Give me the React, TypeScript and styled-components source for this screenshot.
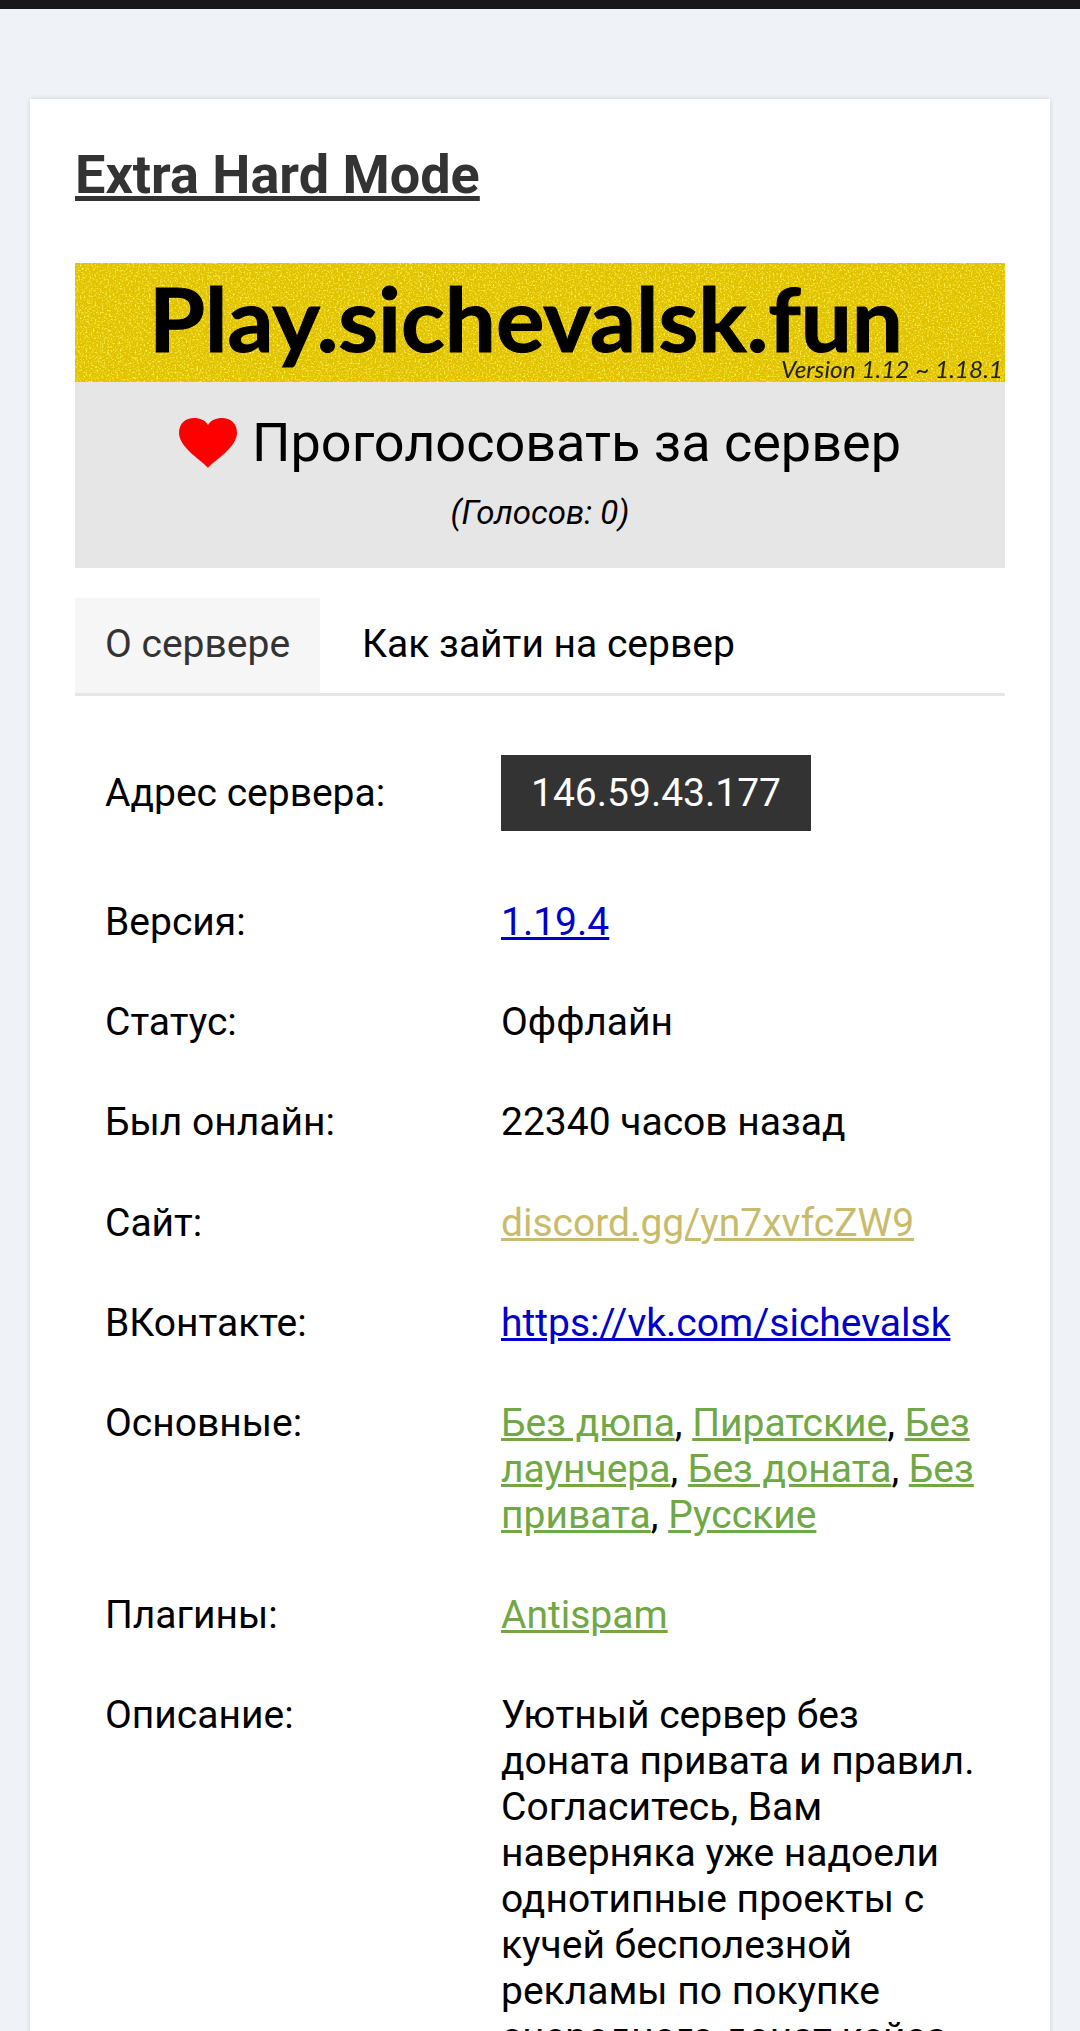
import React from "react";
import styled, { createGlobalStyle } from "styled-components";

const GlobalStyle = createGlobalStyle`
  html, body {
    margin: 0;
    height: 2031px;
    overflow: hidden;
    background: #eff2f6;
    font-family: Roboto, "Liberation Sans", sans-serif;
  }
`;

const TopBar = styled.div`
  height: 9px;
  background: #181818;
`;

const Page = styled.main`
  padding: 90px 30px 0;
`;

const Card = styled.section`
  background: #fff;
  padding: 45px;
  box-shadow: 0 0 5px rgba(0, 0, 0, 0.14);
`;

const Title = styled.h1`
  margin: 0 0 57px;
  font-size: 54px;
  line-height: 62px;
  font-weight: 700;
  color: #333;
  text-decoration: underline;
`;

const BannerArt = styled.svg`
  display: block;
  width: 930px;
  height: 119px;
`;

const VoteBox = styled.div`
  background: #e6e6e6;
  height: 186px;
  padding-top: 27px;
  box-sizing: border-box;
  text-align: center;
  color: #000;
`;

const VoteTitle = styled.div`
  display: flex;
  justify-content: center;
  align-items: center;
  gap: 15px;
  font-size: 54px;
  line-height: 68px;
`;

const VoteCount = styled.div`
  margin-top: 16px;
  font-size: 33px;
  line-height: 40px;
  font-style: italic;
`;

const Tabs = styled.nav`
  display: flex;
  gap: 12px;
  margin-top: 30px;
  border-bottom: 3px solid #e6e6e6;
`;

const Tab = styled.div<{ $active?: boolean }>`
  padding: 23px 30px;
  height: 95px;
  box-sizing: border-box;
  font-size: 39px;
  line-height: 46px;
  color: ${(p) => (p.$active ? "#333" : "#000")};
  background: ${(p) => (p.$active ? "#f6f6f6" : "transparent")};
`;

const Rows = styled.div`
  padding: 32px 30px 0;
`;

const Row = styled.div<{ $chip?: boolean }>`
  display: grid;
  grid-template-columns: 396px 1fr;
  align-items: ${(p) => (p.$chip ? "center" : "start")};
  padding: ${(p) => (p.$chip ? "27px 0 41px" : "27.1px 0")};
  font-size: 39px;
  line-height: 46px;
  color: #000;
`;

const AddressChip = styled.div`
  width: fit-content;
  padding: 15px 30px;
  background: #333;
  color: #fff;
`;

const Link = styled.a<{ $tone: "blue" | "sand" | "green" }>`
  text-decoration: underline;
  color: ${(p) =>
    p.$tone === "blue" ? "#0000cc" : p.$tone === "sand" ? "#c8bc6c" : "#70a845"};
`;

const tags = ["Без дюпа", "Пиратские", "Без лаунчера", "Без доната", "Без привата", "Русские"];

const Banner = () => (
  <BannerArt viewBox="0 0 930 119">
    <defs>
      <filter id="grain" x="0" y="0" width="100%" height="100%">
        <feTurbulence type="fractalNoise" baseFrequency="0.55" numOctaves="2" seed="4" />
        <feColorMatrix values="0 0 0 0 1  0 0 0 0 0.9  0 0 0 0 0.1  3 0 0 0 -1.45" />
      </filter>
      <filter id="soft">
        <feGaussianBlur stdDeviation="0.7" />
      </filter>
    </defs>
    <rect width="930" height="119" fill="#e0c200" />
    <rect width="930" height="119" filter="url(#grain)" />
    <g filter="url(#soft)">
      <text
        x="74"
        y="89"
        fontFamily="Lato, sans-serif"
        fontWeight="700"
        fontSize="88"
        textLength="754"
        lengthAdjust="spacingAndGlyphs"
        stroke="#060600"
        strokeWidth="1"
        fill="#060600"
      >
        Play.sichevalsk.fun
      </text>
      <text
        x="706"
        y="115"
        fontFamily="Lato, sans-serif"
        fontStyle="italic"
        fontSize="23"
        textLength="222"
        lengthAdjust="spacingAndGlyphs"
        fill="#22220c"
      >
        Version 1.12 ~ 1.18.1
      </text>
    </g>
  </BannerArt>
);

const Heart = () => (
  <svg width="58" height="50" viewBox="0 0 58 50" style={{ display: "block" }}>
    <path
      d="M29 50 C25 44 0 30 0 15 C0 5 7 0 15 0 C21 0 26 2 29 7 C32 2 37 0 43 0 C51 0 58 5 58 15 C58 30 33 44 29 50 Z"
      fill="#ff0000"
    />
  </svg>
);

export default function App() {
  return (
    <>
      <GlobalStyle />
      <TopBar />
      <Page>
        <Card>
          <Title>Extra Hard Mode</Title>
          <Banner />
          <VoteBox>
            <VoteTitle>
              <Heart />
              Проголосовать за сервер
            </VoteTitle>
            <VoteCount>(Голосов: 0)</VoteCount>
          </VoteBox>
          <Tabs>
            <Tab $active>О сервере</Tab>
            <Tab>Как зайти на сервер</Tab>
          </Tabs>
          <Rows>
            <Row $chip>
              <span>Адрес сервера:</span>
              <AddressChip>146.59.43.177</AddressChip>
            </Row>
            <Row>
              <span>Версия:</span>
              <div>
                <Link $tone="blue">1.19.4</Link>
              </div>
            </Row>
            <Row>
              <span>Статус:</span>
              <div>Оффлайн</div>
            </Row>
            <Row>
              <span>Был онлайн:</span>
              <div>22340 часов назад</div>
            </Row>
            <Row>
              <span>Сайт:</span>
              <div>
                <Link $tone="sand">discord.gg/yn7xvfcZW9</Link>
              </div>
            </Row>
            <Row>
              <span>ВКонтакте:</span>
              <div>
                <Link $tone="blue">https://vk.com/sichevalsk</Link>
              </div>
            </Row>
            <Row>
              <span>Основные:</span>
              <div>
                {tags.map((tag, i) => (
                  <React.Fragment key={tag}>
                    <Link $tone="green">{tag}</Link>
                    {i < tags.length - 1 ? ", " : ""}
                  </React.Fragment>
                ))}
              </div>
            </Row>
            <Row>
              <span>Плагины:</span>
              <div>
                <Link $tone="green">Antispam</Link>
              </div>
            </Row>
            <Row>
              <span>Описание:</span>
              <div>
                Уютный сервер без доната привата и правил. Согласитесь, Вам наверняка уже надоели
                однотипные проекты с кучей бесполезной рекламы по покупке очередного донат кейса
              </div>
            </Row>
          </Rows>
        </Card>
      </Page>
    </>
  );
}
